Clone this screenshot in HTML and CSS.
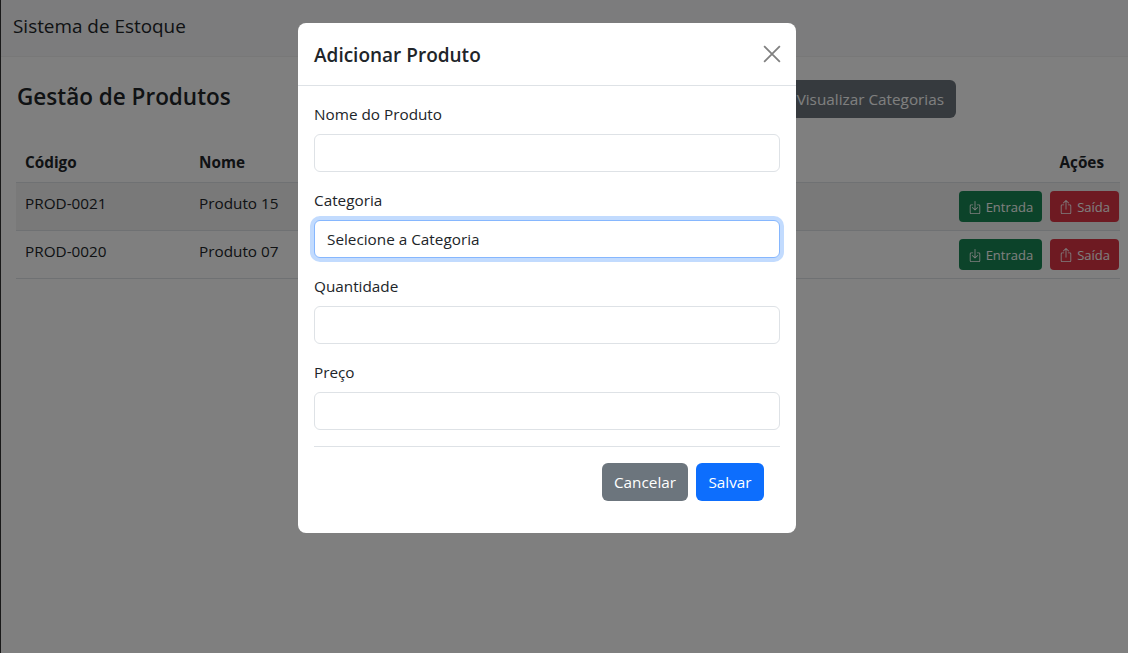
FILE: index.html
```html
<!DOCTYPE html>
<html lang="pt-BR">
<head>
    <meta charset="UTF-8">
    <title>Sistema de Estoque</title>
    <link rel="stylesheet" href="styles.css">
</head>
<body>
<nav class="navbar">Sistema de Estoque</nav>
<main class="page">
    <div class="page_head">
        <h1>Gestão de Produtos</h1>
        <div class="page_actions">
            <button class="btn btn_dark">Visualizar Categorias</button>
        </div>
    </div>
    <table class="products">
        <thead>
            <tr>
                <th class="col_code">Código</th>
                <th>Nome</th>
                <th class="col_actions">Ações</th>
            </tr>
        </thead>
        <tbody>
            <tr class="row_hover">
                <td>PROD-0021</td>
                <td>Produto 15</td>
                <td class="cell_actions">
                    <div class="action_btns">
                        <button class="btn_sm btn_green">
                            <svg viewBox="0 0 16 16" class="icon"><path d="M3.500 6a.5.5 0 0 0-.5.5v8a.5.5 0 0 0 .5.5h9a.5.5 0 0 0 .5-.5v-8a.5.5 0 0 0-.5-.5h-2a.5.5 0 0 1 0-1h2A1.500 1.500 0 0 1 14 6.500v8a1.500 1.500 0 0 1-1.500 1.500h-9A1.500 1.500 0 0 1 2 14.500v-8A1.500 1.500 0 0 1 3.500 5h2a.5.5 0 0 1 0 1h-2z"/><path d="M7.646 11.854a.5.5 0 0 0 .708 0l3-3a.5.5 0 0 0-.708-.708L8.500 10.293V1.500a.5.5 0 0 0-1 0v8.793L5.354 8.146a.5.5 0 1 0-.708.708l3 3z"/></svg>
                            Entrada
                        </button>
                        <button class="btn_sm btn_red">
                            <svg viewBox="0 0 16 16" class="icon"><path d="M3.500 6a.5.5 0 0 0-.5.5v8a.5.5 0 0 0 .5.5h9a.5.5 0 0 0 .5-.5v-8a.5.5 0 0 0-.5-.5h-2a.5.5 0 0 1 0-1h2A1.500 1.500 0 0 1 14 6.500v8a1.500 1.500 0 0 1-1.500 1.500h-9A1.500 1.500 0 0 1 2 14.500v-8A1.500 1.500 0 0 1 3.500 5h2a.5.5 0 0 1 0 1h-2z"/><path d="M7.646.146a.5.5 0 0 1 .708 0l3 3a.5.5 0 0 1-.708.708L8.500 1.707V10.500a.5.5 0 0 1-1 0V1.707L5.354 3.854a.5.5 0 1 1-.708-.708l3-3z"/></svg>
                            Saída
                        </button>
                    </div>
                </td>
            </tr>
            <tr>
                <td>PROD-0020</td>
                <td>Produto 07</td>
                <td class="cell_actions">
                    <div class="action_btns">
                        <button class="btn_sm btn_green">
                            <svg viewBox="0 0 16 16" class="icon"><path d="M3.500 6a.5.5 0 0 0-.5.5v8a.5.5 0 0 0 .5.5h9a.5.5 0 0 0 .5-.5v-8a.5.5 0 0 0-.5-.5h-2a.5.5 0 0 1 0-1h2A1.500 1.500 0 0 1 14 6.500v8a1.500 1.500 0 0 1-1.500 1.500h-9A1.500 1.500 0 0 1 2 14.500v-8A1.500 1.500 0 0 1 3.500 5h2a.5.5 0 0 1 0 1h-2z"/><path d="M7.646 11.854a.5.5 0 0 0 .708 0l3-3a.5.5 0 0 0-.708-.708L8.500 10.293V1.500a.5.5 0 0 0-1 0v8.793L5.354 8.146a.5.5 0 1 0-.708.708l3 3z"/></svg>
                            Entrada
                        </button>
                        <button class="btn_sm btn_red">
                            <svg viewBox="0 0 16 16" class="icon"><path d="M3.500 6a.5.5 0 0 0-.5.5v8a.5.5 0 0 0 .5.5h9a.5.5 0 0 0 .5-.5v-8a.5.5 0 0 0-.5-.5h-2a.5.5 0 0 1 0-1h2A1.500 1.500 0 0 1 14 6.500v8a1.500 1.500 0 0 1-1.500 1.500h-9A1.500 1.500 0 0 1 2 14.500v-8A1.500 1.500 0 0 1 3.500 5h2a.5.5 0 0 1 0 1h-2z"/><path d="M7.646.146a.5.5 0 0 1 .708 0l3 3a.5.5 0 0 1-.708.708L8.500 1.707V10.500a.5.5 0 0 1-1 0V1.707L5.354 3.854a.5.5 0 1 1-.708-.708l3-3z"/></svg>
                            Saída
                        </button>
                    </div>
                </td>
            </tr>
        </tbody>
    </table>
</main>

<!-- modal -->
<div class="backdrop"></div>
<div class="modal_wrap">
    <div class="modal">
        <div class="modal_head">
            <h2>Adicionar Produto</h2>
            <svg viewBox="0 0 16 16" class="close_x"><path d="M1 1l14 14M15 1 1 15"/></svg>
        </div>
        <form class="modal_body">
            <label>Nome do Produto</label>
            <input class="field" type="text">
            <label>Categoria</label>
            <div class="field field_focus">Selecione a Categoria</div>
            <label>Quantidade</label>
            <input class="field" type="text">
            <label>Preço</label>
            <input class="field" type="text">
            <div class="modal_foot">
                <button type="button" class="btn btn_gray">Cancelar</button>
                <button type="button" class="btn btn_blue">Salvar</button>
            </div>
        </form>
    </div>
</div>
</body>
</html>
```

FILE: styles.css
```css
*{margin: 0;padding: 0;box-sizing: border-box;}
body{
    height: 653px;
    overflow: hidden;
    background-color: #fff;
    color: #212529;
    font-family: "Open Sans", "Noto Sans", sans-serif;
    font-size: 15.3px;
    line-height: 24px;
    border-left: 1px solid #333;
}
.navbar{
    height: 57px;
    padding: 12px;
    font-size: 18.9px;
    line-height: 28px;
    background-color: #f8f9fa;
    border-bottom: 1px solid #f0f0f0;
}
.page{
    padding: 23px 8px 0 15px;
}
.page_head{
    display: flex;
    justify-content: space-between;
    align-items: flex-start;
    height: 38px;
    margin-bottom: 27px;
}
.page_head h1{
    margin-left: 1px;
    font-size: 22.5px;
    font-weight: 600;
    line-height: 34px;
}
.page_actions{
    padding-right: 164px;
}
.btn{
    height: 38px;
    padding: 0 12px;
    border: 0;
    border-radius: 6px;
    font: inherit;
    color: #fff;
}
.btn_dark{
    width: 200px;
    background-color: #6c757d;
    text-align: right;
}
.btn_gray{background-color: #6c757d;}
.btn_blue{
    min-width: 68px;
    background-color: #0d6efd;
}

/* tabela */
.products{
    width: 100%;
    border-collapse: collapse;
}
.products th{
    height: 37px;
    padding: 0 9px 3px;
    text-align: left;
    font-weight: 700;
    border-bottom: 1px solid #dee2e6;
}
.products td{
    height: 48px;
    padding: 0 9px;
    border-bottom: 1px solid #dee2e6;
    vertical-align: top;
    line-height: 40px;
}
.col_code{width: 174px;}
.products .col_actions{
    text-align: right;
    padding-right: 16px;
}
.row_hover td{background-color: #f2f2f2;}
.products .cell_actions{
    padding: 8px 1px 0 0;
    line-height: 1;
}
.action_btns{
    display: flex;
    justify-content: flex-end;
    gap: 8px;
}
.btn_sm{
    display: inline-flex;
    align-items: center;
    gap: 4px;
    height: 31px;
    padding: 2px 9px 0;
    border: 0;
    border-radius: 4px;
    font-family: inherit;
    font-size: 13px;
    color: #fff;
}
.btn_green{background-color: #198754;}
.btn_red{background-color: #dc3545;}
.icon{
    width: 14px;
    height: 14px;
    fill: currentColor;
}

/* modal */
.backdrop{
    position: fixed;
    top: 0;
    left: 0;
    width: 100%;
    height: 100%;
    background-color: #000;
    opacity: .5;
}
.modal_wrap{
    position: fixed;
    top: 0;
    left: 0;
    width: 100%;
    height: 100%;
    padding: 23px 332px 0 298px;
}
.modal{
    width: 498px;
    height: 510px;
    background-color: #fff;
    border-radius: 8px;
}
.modal_head{
    display: flex;
    justify-content: space-between;
    align-items: center;
    height: 63px;
    padding: 2px 16px 0;
    border-bottom: 1px solid #dee2e6;
}
.modal_head h2{
    font-size: 19px;
    font-weight: 600;
    line-height: 28px;
}
.close_x{
    width: 18px;
    height: 18px;
    margin: -2px -1px 0 0;
    fill: none;
    stroke: #808080;
    stroke-width: 1.6;
}
.modal_body{
    padding: 16px;
}
.modal_body label{
    display: block;
    margin-bottom: 8px;
}
.field{
    display: block;
    width: 100%;
    height: 38px;
    margin-bottom: 16px;
    padding: 6px 12px;
    border: 1px solid #dee2e6;
    border-radius: 6px;
    font: inherit;
    background-color: #fff;
}
.field_focus{
    border-color: #86b7fe;
    box-shadow: 0 0 0 4px rgba(13, 110, 253, .25);
}
.modal_foot{
    display: flex;
    justify-content: flex-end;
    gap: 8px;
    padding: 16px 16px 0;
    border-top: 1px solid #dee2e6;
}
```
